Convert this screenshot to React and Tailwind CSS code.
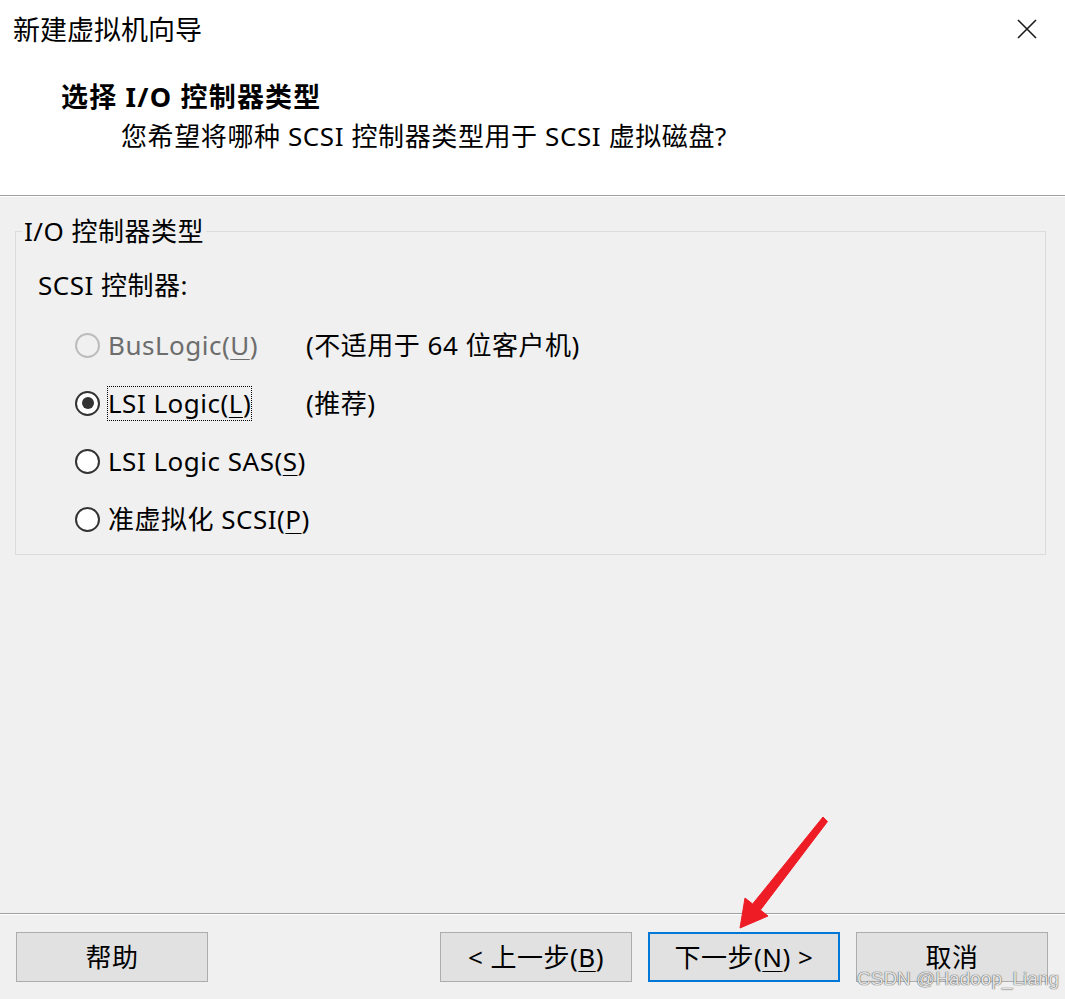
import React from "react";

function Radio({ checked, disabled }) {
  return (
    <span
      className={
        "flex items-center justify-center w-[25px] h-[25px] rounded-full border-2 shrink-0 " +
        (disabled ? "border-[#bcbcbc] bg-[#f0f0f0]" : "border-[#333333] bg-white")
      }
    >
      {checked && <span className="w-[12px] h-[12px] rounded-full bg-[#333333]" />}
    </span>
  );
}

function Option({ label, mnemonic, after, note, checked, disabled, focused }) {
  return (
    <div className="flex items-center h-[36px]">
      <Radio checked={checked} disabled={disabled} />
      <div className="w-[199px] ml-[7px] shrink-0 flex items-center">
        <span
          className={
            "h-[35px] flex items-center whitespace-nowrap border " +
            (focused ? "border-dotted border-black" : "border-transparent") +
            (disabled ? " text-[#6d6d6d]" : " text-black")
          }
        >
          {label}
          <u className="underline decoration-1 underline-offset-[4px]">{mnemonic}</u>
          {after}
        </span>
      </div>
      {note && <span className="whitespace-nowrap">{note}</span>}
    </div>
  );
}

function Button({ children, primary }) {
  return (
    <div
      className={
        "w-[192px] h-[50px] flex items-center justify-center bg-[#e1e1e1] text-[26px] tracking-[0.5px] whitespace-nowrap " +
        (primary ? "border-2 border-[#0078d7]" : "border border-[#adadad]")
      }
    >
      {children}
    </div>
  );
}

export default function App() {
  return (
    <div className="relative w-[1065px] h-[999px] overflow-hidden bg-[#f0f0f0] text-black flex flex-col font-['Noto_Sans','Noto_Sans_CJK_SC',sans-serif]">
      {/* Header */}
      <div className="bg-white h-[195px] flex flex-col shrink-0">
        <div className="h-[58px] flex items-center justify-between pl-[13px] pr-[28px]">
          <span className="text-[27px] leading-none">新建虚拟机向导</span>
          <svg width="20" height="20" viewBox="0 0 20 20" className="shrink-0">
            <path d="M1 1 L19 19 M19 1 L1 19" stroke="#1a1a1a" strokeWidth="1.6" fill="none" />
          </svg>
        </div>
        <div className="mt-[24px] h-[28px] pl-[61px] flex items-center text-[27px] tracking-[1.2px] font-bold leading-none">
          选择 I/O 控制器类型
        </div>
        <div className="mt-[12px] h-[28px] pl-[121px] flex items-center text-[26px] tracking-[0.6px] leading-none">
          您希望将哪种 SCSI 控制器类型用于 SCSI 虚拟磁盘?
        </div>
      </div>
      <div className="h-px bg-[#a0a0a0] shrink-0" />
      <div className="h-px bg-white shrink-0" />

      {/* Group box */}
      <fieldset className="ml-[15px] mr-[19px] mt-[20px] border border-[#dcdcdc] p-0 shrink-0">
        <legend className="ml-[6px] px-[2px] text-[26px] tracking-[0.5px] h-[28px] leading-[28px]">I/O 控制器类型</legend>
        <div className="pl-[22px] pb-[17px] text-[26px] tracking-[0.5px] leading-none flex flex-col">
          <div className="mt-[26px] h-[28px] flex items-center">SCSI 控制器:</div>
          <div className="mt-[28px] ml-[37px] flex flex-col gap-[22px]">
            <Option label="BusLogic(" mnemonic="U" after=")" note="(不适用于 64 位客户机)" disabled />
            <Option label="LSI Logic(" mnemonic="L" after=")" note="(推荐)" checked focused />
            <Option label="LSI Logic SAS(" mnemonic="S" after=")" />
            <Option label="准虚拟化 SCSI(" mnemonic="P" after=")" />
          </div>
        </div>
      </fieldset>

      <div className="flex-1" />

      {/* Footer */}
      <div className="h-px bg-[#a0a0a0] shrink-0" />
      <div className="h-px bg-white shrink-0" />
      <div className="h-[84px] pt-[17px] flex items-start shrink-0">
        <div className="ml-[16px]">
          <Button>帮助</Button>
        </div>
        <div className="ml-auto mr-[17px] flex gap-[16px]">
          <Button>
            &lt; 上一步(<u className="underline decoration-1 underline-offset-[4px]">B</u>)
          </Button>
          <Button primary>
            下一步(<u className="underline decoration-1 underline-offset-[4px]">N</u>) &gt;
          </Button>
          <Button>取消</Button>
        </div>
      </div>

      {/* Red annotation arrow */}
      <svg className="absolute inset-0 pointer-events-none" width="1065" height="999" viewBox="0 0 1065 999">
        <polygon
          points="823,817 827.5,821.5 760.4,910 768,916 740,928 745,898 752.6,904"
          fill="#ee1c25"
          stroke="#ee1c25"
          strokeWidth="1"
          strokeLinejoin="round"
        />
      </svg>

      {/* Watermark */}
      <div className="absolute left-[857px] top-[967px] text-[19px] leading-[24px] whitespace-nowrap text-[#e4e4e4] font-['Liberation_Sans',sans-serif] [text-shadow:0_0_1px_#555555,0_0_1px_#555555] pointer-events-none">
        CSDN @Hadoop_Liang
      </div>
    </div>
  );
}
